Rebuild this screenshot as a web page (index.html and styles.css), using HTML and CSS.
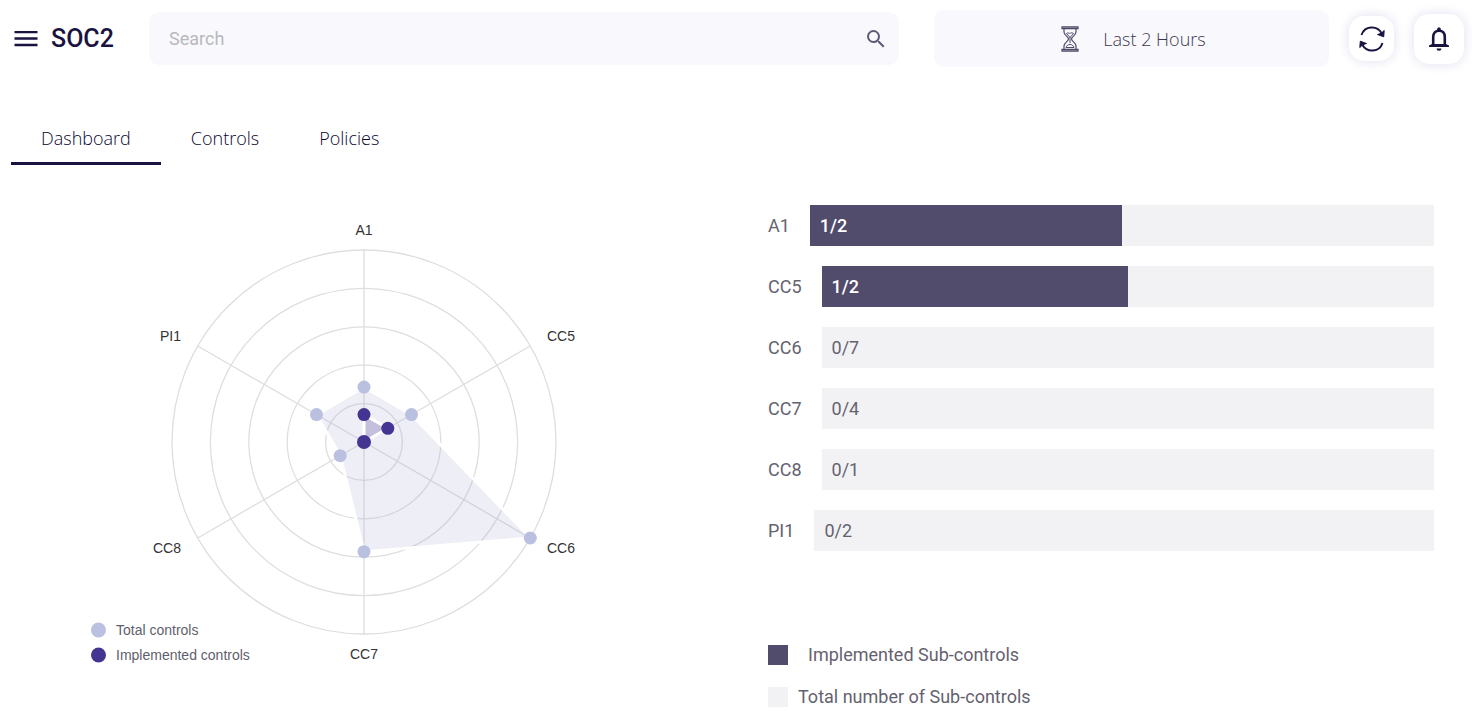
FILE: index.html
```html
<!DOCTYPE html>
<html lang="en">
<head>
<meta charset="utf-8">
<meta name="viewport" content="width=device-width, initial-scale=1">
<title>SOC2</title>
<link rel="stylesheet" href="styles.css">
</head>
<body>
<header class="topbar">
  <button class="menu" type="button" aria-label="Menu">
    <svg width="24" height="16" viewBox="0 0 24 16"><path d="M.5 1h23M.5 7.500h23M.5 14h23" stroke="currentColor" stroke-width="2.400"/></svg>
  </button>
  <h1 class="title">SOC2</h1>
  <form class="search" role="search">
    <input class="search-input" type="search" placeholder="Search" aria-label="Search">
    <button class="search-button" type="submit" aria-label="Search">
      <svg width="24" height="24" viewBox="0 0 24 24" fill="currentColor"><path d="M15.5 14h-.79l-.28-.27A6.47 6.47 0 0 0 16 9.5 6.5 6.5 0 1 0 9.5 16c1.61 0 3.09-.59 4.23-1.57l.27.28v.79l5 4.99L20.49 19l-4.99-5zm-6 0C7.01 14 5 11.99 5 9.5S7.01 5 9.5 5 14 7.01 14 9.5 11.99 14 9.5 14z"/></svg>
    </button>
  </form>
  <button class="range" type="button" aria-haspopup="listbox">
    <svg width="18" height="26" viewBox="0 0 18 26" fill="none" stroke="#4f4968" stroke-width="1.2">
      <path d="M1 .9h16v1.8H1zM1 23.3h16v1.8H1z" fill="#aba8bc"/>
      <path d="M3 3v3c0 3.500 4.500 4.500 4.500 7S3 16.500 3 20v3M15 3v3c0 3.500-4.500 4.500-4.500 7s4.500 3.500 4.500 7v3"/>
      <path d="M5.500 7.500c1.500-1.500 3 .5 4-.3s2-.5 3 .3L9 11.500zM9 11v6M5 21.500c.5-2 2-3 4-3s3.500 1 4 3z" stroke-width="1"/>
    </svg>
    <span>Last 2 Hours</span>
  </button>
  <button class="tile tile-small" type="button" aria-label="Refresh">
    <svg width="26" height="26" viewBox="0 0 26 26" fill="none" stroke="currentColor" stroke-width="2">
      <path d="M2.500 9C5.500-.5 18-1 22.500 7M23.500 17C20.500 26.500 8 27 3.500 19"/>
      <path d="M25.200 4.500l-.5 6.300-6.200-2.300 3.700-1.200zM.8 21.500l.5-6.300 6.200 2.300-3.700 1.200z" fill="currentColor" stroke-width="1"/>
    </svg>
  </button>
  <button class="tile" type="button" aria-label="Notifications">
    <svg width="20" height="26" viewBox="0 0 20 26">
      <path d="M4.200 19.500V11c0-4 2.300-6.300 5.800-6.300s5.800 2.300 5.800 6.300v8.500" fill="none" stroke="currentColor" stroke-width="2.600"/>
      <path d="M8 4a2 2.700 0 0 1 4 0zM0 21v-1.500l3-1.500h14l3 1.500V21zM7.500 22.500h5a2.500 2.200 0 0 1-5 0z" fill="currentColor"/>
    </svg>
  </button>
</header>

<nav class="tabs">
  <a class="tab tab-active" href="#dashboard" aria-current="page">Dashboard</a>
  <a class="tab" href="#controls">Controls</a>
  <a class="tab" href="#policies">Policies</a>
</nav>

<main class="dashboard" id="dashboard">
  <section class="radar" aria-label="Controls by category">
    <svg class="radar-chart" viewBox="0 0 600 460" role="img" aria-label="Total and implemented controls">
      <g transform="translate(300 227)">
        <g class="grid-line">
          <circle r="38.400"/><circle r="76.800"/><circle r="115.200"/><circle r="153.600"/><circle r="192"/>
          <path d="M0 0V-192M0 0L166.300-96M0 0L166.300 96M0 0V192M0 0L-166.300 96M0 0L-166.300-96"/>
        </g>
        <polygon class="area-total" points="0,-54.9 47.5,-27.4 166.3,96 0,109.7 -23.8,13.7 -47.5,-27.4"/>
        <polygon class="area-edge" points="0,-54.9 47.5,-27.4 166.3,96 0,109.7 -23.8,13.7 -47.5,-27.4"/>
        <g class="dot-total">
          <circle cy="-54.9" r="6.500"/><circle cx="47.5" cy="-27.4" r="6.500"/><circle cx="166.300" cy="96" r="6.500"/>
          <circle cy="109.700" r="6.500"/><circle cx="-23.8" cy="13.700" r="6.500"/><circle cx="-47.5" cy="-27.4" r="6.500"/>
        </g>
        <polygon class="area-done" points="0,-27.4 23.8,-13.7 0,0"/>
        <polygon class="area-edge" points="0,-27.4 23.8,-13.7 0,0"/>
        <g class="dot-done"><circle cy="-27.4" r="6.500"/><circle cx="23.800" cy="-13.700" r="6.500"/><circle r="7"/></g>
        <g class="axis-label">
          <text y="-207" text-anchor="middle">A1</text>
          <text x="183" y="-101">CC5</text>
          <text x="183" y="111">CC6</text>
          <text y="217" text-anchor="middle">CC7</text>
          <text x="-183" y="111" text-anchor="end">CC8</text>
          <text x="-183" y="-101" text-anchor="end">PI1</text>
        </g>
      </g>
      <g class="radar-legend">
        <circle class="dot-total" cx="34.500" cy="415" r="7.500"/><text x="52" y="420">Total controls</text>
        <circle class="dot-done" cx="34.500" cy="440" r="7.500"/><text x="52" y="445">Implemented controls</text>
      </g>
    </svg>
  </section>

  <section class="progress" aria-label="Sub-controls by category">
    <div class="bars">
      <div class="bar-row"><span>A1</span><div class="bar"><div class="bar-fill" style="width:50%">1/2</div></div></div>
      <div class="bar-row"><span>CC5</span><div class="bar"><div class="bar-fill" style="width:50%">1/2</div></div></div>
      <div class="bar-row"><span>CC6</span><div class="bar bar-empty">0/7</div></div>
      <div class="bar-row"><span>CC7</span><div class="bar bar-empty">0/4</div></div>
      <div class="bar-row"><span>CC8</span><div class="bar bar-empty">0/1</div></div>
      <div class="bar-row"><span>PI1</span><div class="bar bar-empty">0/2</div></div>
    </div>
    <ul class="legend">
      <li class="legend-item legend-done"><i class="swatch swatch-done"></i>Implemented Sub-controls</li>
      <li class="legend-item"><i class="swatch"></i>Total number of Sub-controls</li>
    </ul>
  </section>
</main>
</body>
</html>
```
FILE: styles.css
```css
* { box-sizing: border-box; }

body {
  margin: 0;
  background: #fff;
  color: #1a1340;
  font-family: Roboto, "Liberation Sans", sans-serif;
  font-size: 18px;
}

button {
  border: 0;
  padding: 0;
  background: none;
  color: inherit;
  font: inherit;
  cursor: pointer;
}

svg { display: block; }

.topbar {
  display: flex;
  align-items: center;
  padding: 10px 8px 0 14px;
}

.title {
  width: 98px;
  margin: 0 0 0 13px;
  font-size: 25px;
  font-weight: 500;
  line-height: 32px;
}

.search {
  display: flex;
  align-items: center;
  flex: 2 1 750px;
  height: 53px;
  padding: 0 11px 0 20px;
  border-radius: 10px;
  background: #f8f8fd;
}

.search-input {
  flex: 1;
  min-width: 0;
  padding: 0;
  border: 0;
  outline: 0;
  background: none;
  color: #5f5c70;
  font: inherit;
}

.search-input::placeholder { color: #b9b9bd; }

.search-button { color: #5f5a75; }

.range {
  display: flex;
  align-items: center;
  justify-content: center;
  flex: 1 1 395px;
  gap: 24px;
  height: 57px;
  margin: 0 20px 0 35px;
  padding-left: 4px;
  border-radius: 10px;
  background: #f8f8fd;
  color: #3c3850;
  font-family: "Open Sans", sans-serif;
  font-weight: 300;
}

.tile {
  display: grid;
  place-items: center;
  width: 50px;
  height: 50px;
  border-radius: 15px;
  background: #fff;
  box-shadow: 0 0 12px #dedeef;
}

.tile-small {
  width: 45px;
  height: 45px;
  margin-right: 20px;
}

.tabs {
  display: flex;
  margin: 46px 11px 0;
}

.tab {
  padding: 13px 30px 11px;
  border-bottom: 3px solid transparent;
  color: #0c0630;
  font-family: "Open Sans", sans-serif;
  font-weight: 300;
  line-height: 25px;
  text-decoration: none;
}

.tab-active { border-color: #1a1340; }

.dashboard {
  display: grid;
  grid-template-columns: 704px 1fr;
  padding: 40px 38px 14px 64px;
}

.radar { padding-top: 10px; }

.radar-chart {
  width: 100%;
  max-width: 600px;
  font-family: "Liberation Sans", Arial, sans-serif;
  font-size: 14px;
}

.grid-line {
  fill: none;
  stroke: #dedee0;
  stroke-width: 1.300;
}

.area-total { fill: #9fa0cf; fill-opacity: .18; }
.area-done { fill: #453592; fill-opacity: .25; }
.area-edge { fill: none; stroke: #fff; stroke-width: 3; }
.dot-total { fill: #bac0e0; }
.dot-done { fill: #453592; }
.axis-label { fill: #333; }
.radar-legend text { fill: #5f5f6b; }

.progress { color: #65626f; }

.bars { display: grid; gap: 20px; }

.bar-row {
  display: flex;
  gap: 20px;
  line-height: 41px;
}

.bar {
  flex: 1;
  background: #f2f2f5;
}

.bar-empty { padding-left: 10px; }

.bar-fill {
  padding-left: 10px;
  background: #514b6c;
  color: #fff;
  font-weight: 500;
}

.legend {
  display: grid;
  gap: 18px;
  margin: 92px 0 0;
  padding: 0;
  list-style: none;
  line-height: 24px;
}

.legend-item {
  display: flex;
  align-items: center;
  gap: 10px;
}

.legend-done { gap: 20px; }

.swatch {
  width: 20px;
  height: 20px;
  background: #f2f2f5;
}

.swatch-done { background: #514b6c; }
```
